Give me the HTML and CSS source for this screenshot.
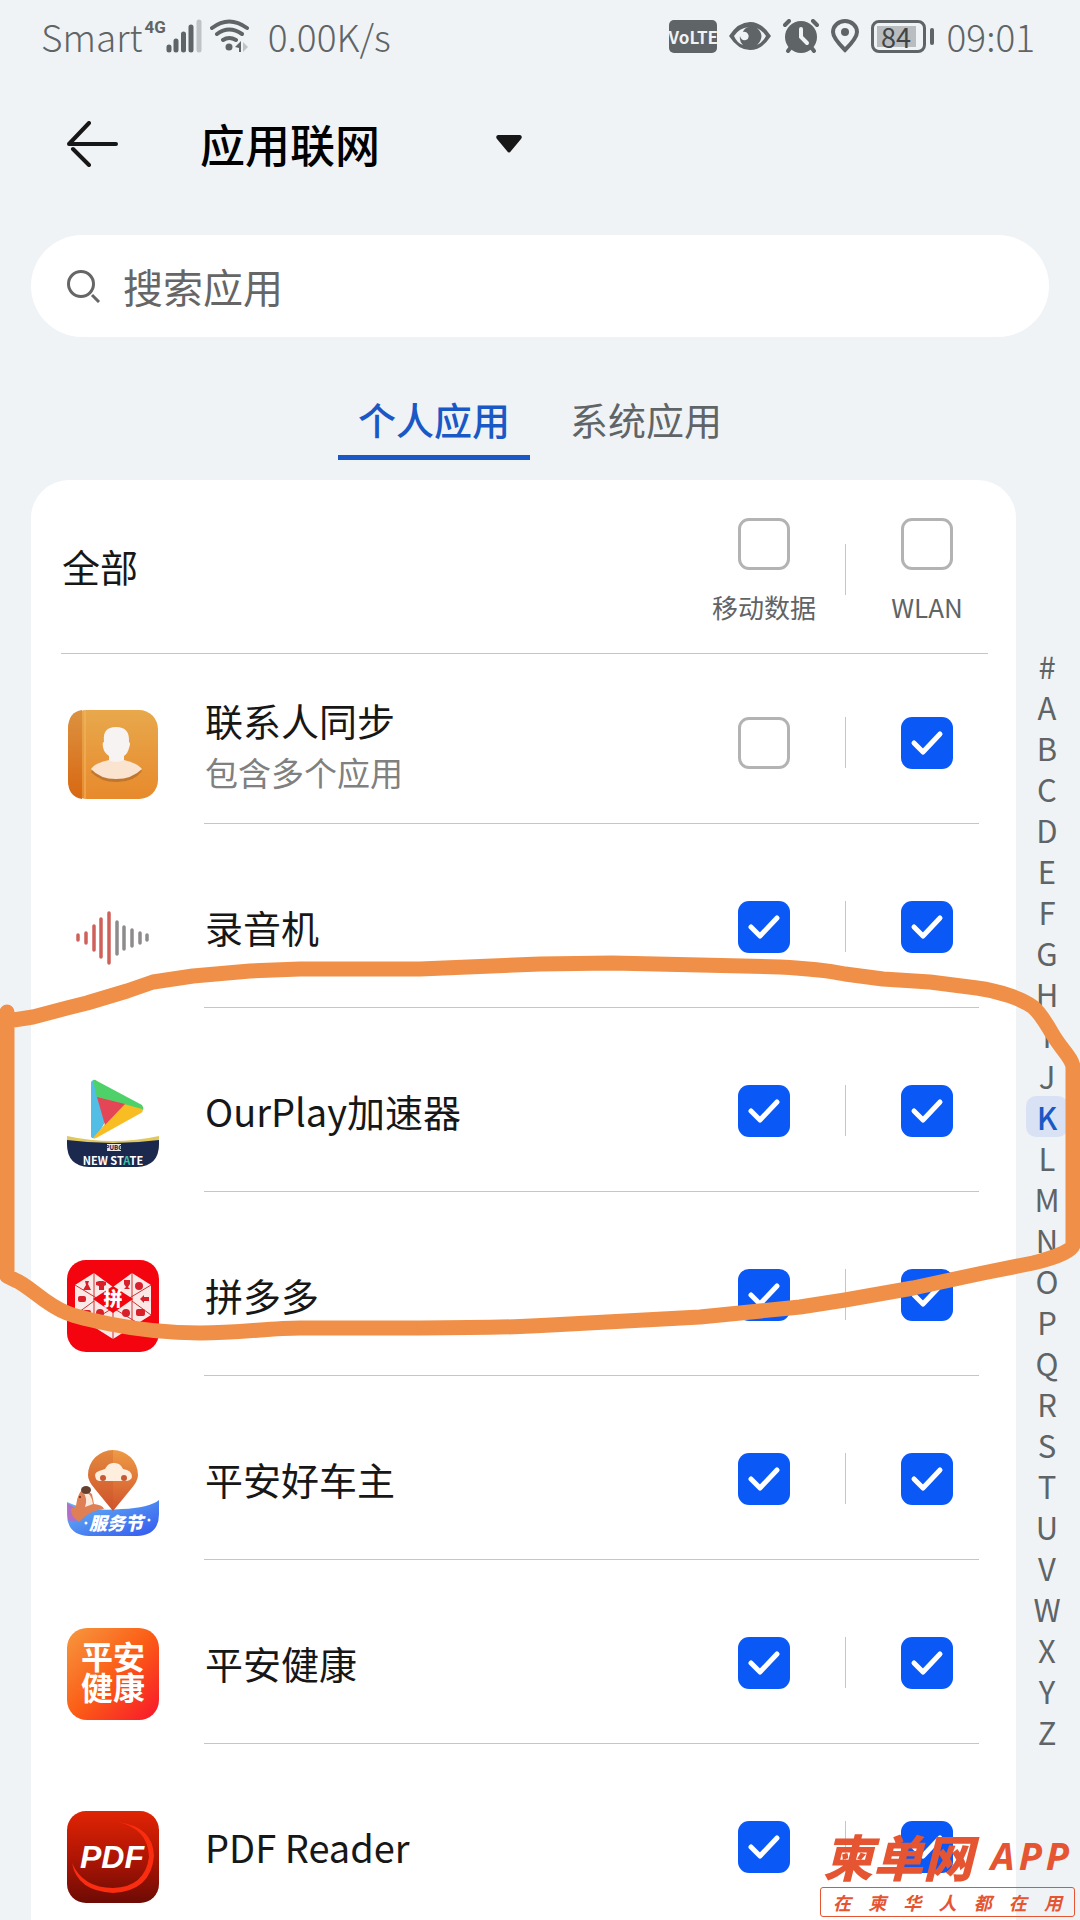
FILE: index.html
```html
<!doctype html>
<html lang="zh-CN">
    <head>
        <meta charset="UTF-8" />
        <meta name="viewport" content="width=device-width, initial-scale=1.0" />
        <title>应用联网</title>
        <link rel="stylesheet" href="styles.css">
    </head>
    <body>
        <div class="status-bar">
            <div class="status-left">
                <span>Smart</span>
                <span class="network">4G</span>
                <svg class="signal" width="36" height="34" viewBox="0 0 36 34" stroke-width="5" stroke-linecap="round">
                    <path d="M3 28v3M10 22v9M17.500 15v16M25 8v23" />
                    <path class="faded" d="M33 3v28" />
                </svg>
                <svg class="wifi" width="40" height="34" viewBox="0 0 40 34" fill="none" stroke-linecap="round">
                    <path stroke-width="4" d="M2 9Q19 -4 37 9M7 15Q19 6 32 15M13 21Q19 17 26 21" />
                    <circle class="solid" cx="19" cy="28" r="3.500" />
                    <path class="solid" d="M25 28l6-6v11h-2v-4z" />
                    <path class="faded-fill" d="M33 23l5 5-5 5z" />
                </svg>
                <span>0.00K/s</span>
            </div>
            <div class="status-right">
                <span class="volte">VoLTE</span>
                <svg width="42" height="28" viewBox="0 0 42 28">
                    <path class="solid" fill-rule="evenodd" d="M0 14Q9 0 21 0T42 14Q33 28 21 28T0 14zM5 14Q8 21 14 23Q10 19 11 14Q12 19 17 18Q21 16 19 12Q17 9 14 10Q15 6 20 5Q10 6 5 14zM28 6Q37 14 28 23Q34 20 37 14Q34 9 28 6z" />
                </svg>
                <svg width="36" height="34" viewBox="0 0 36 34" fill="none" stroke-linecap="round">
                    <circle class="solid" cx="18" cy="18" r="16" />
                    <path stroke-width="4" d="M2 6l4-4M34 6l-4-4M5 32l3-4M31 32l-3-4" />
                    <path class="hand" stroke-width="4" d="M18 10v8l6 6" />
                </svg>
                <svg width="28" height="34" viewBox="0 0 28 34" fill="none">
                    <path stroke-width="4" d="M14 31Q2 19 2 13A12 11 0 0 1 26 13Q26 19 14 31z" />
                    <circle class="solid" cx="14" cy="13" r="4" />
                </svg>
                <div class="battery"><span class="battery-level">84</span></div>
                <span>09:01</span>
            </div>
        </div>

        <header class="title-bar">
            <button class="back" type="button" aria-label="返回">
                <svg width="52" height="46" viewBox="0 0 52 46" fill="none" stroke-width="4" stroke-linecap="round" stroke-linejoin="round">
                    <path d="M50 23H3L23 2M7 28l16 16" />
                </svg>
            </button>
            <div class="picker">
                <select aria-label="页面">
                    <option>应用联网</option>
                </select>
                <svg width="26" height="18" viewBox="0 0 26 18">
                    <path d="M2 0H24Q27 1 25 4L15 16Q13 19 11 16L1 4Q-1 1 2 0z" />
                </svg>
            </div>
        </header>

        <div class="search">
            <svg width="34" height="34" viewBox="0 0 34 34" fill="none" stroke-width="3">
                <circle cx="14" cy="15" r="12.500" />
                <path d="M25 26l7 7" />
            </svg>
            <input type="text" placeholder="搜索应用" aria-label="搜索应用" />
        </div>

        <nav class="tabs">
            <button class="tab active" type="button">个人应用</button>
            <button class="tab" type="button">系统应用</button>
        </nav>

        <main class="content">
            <section class="card">
                <div class="all-row">
                    <span class="all-label">全部</span>
                    <div class="options">
                        <label class="option"><input type="checkbox" />移动数据</label>
                        <i class="divider"></i>
                        <label class="option"><input type="checkbox" />WLAN</label>
                    </div>
                </div>

                <ul class="apps">
                    <li class="app compact">
                        <svg class="app-icon" viewBox="0 0 92 92">
                            <defs>
                                <linearGradient id="book" x2="0" y2="1">
                                    <stop offset="0" stop-color="#e8a84c" />
                                    <stop offset="1" stop-color="#e78a2c" />
                                </linearGradient>
                                <linearGradient id="spine" x2="0" y2="1">
                                    <stop offset="0" stop-color="#dc9240" />
                                    <stop offset="1" stop-color="#d86712" />
                                </linearGradient>
                            </defs>
                            <rect x="1" y="2" width="90" height="89" rx="19" fill="url(#book)" />
                            <path d="M15 2Q1 4 1 21V72Q1 89 15 91z" fill="url(#spine)" />
                            <path d="M18 3v87" stroke="#f2b966" stroke-width="1" />
                            <path d="M24 64Q28 56 40 53H60Q72 57 75 63Q67 74 50 74T24 64z" fill="#a7642a" opacity=".6" />
                            <path d="M24 61Q28 55 42 52H57Q70 55 75 61Q65 71 49 71T24 61z" fill="#fbe4cf" />
                            <path d="M37 34Q35 19 49 19T62 34Q64 35 62 40Q61 45 57 48V52Q49 56 42 52V48Q37 45 36 39Q35 34 37 34z" fill="#f6f3f2" />
                        </svg>
                        <div class="app-body">
                            <div class="app-text">
                                <span class="app-name">联系人同步</span>
                                <span class="app-note">包含多个应用</span>
                            </div>
                            <div class="options">
                                <label class="option"><input type="checkbox" aria-label="联系人同步 移动数据" /></label>
                                <i class="divider"></i>
                                <label class="option"><input type="checkbox" aria-label="联系人同步 WLAN" checked /></label>
                            </div>
                        </div>
                    </li>
                    <li class="app">
                        <svg class="app-icon" viewBox="0 0 92 92" fill="none" stroke-width="3.500" stroke-linecap="round">
                            <path stroke="#d0605a" d="M11 43v5M19 41v10M27 34v24M34 27v38M42 21v50" />
                            <path stroke="#8d8b8c" d="M50 30v32M57 35v22M65 38v16M73 41v10M80 43v5" />
                        </svg>
                        <div class="app-body">
                            <span class="app-name">录音机</span>
                            <div class="options">
                                <label class="option"><input type="checkbox" aria-label="录音机 移动数据" checked /></label>
                                <i class="divider"></i>
                                <label class="option"><input type="checkbox" aria-label="录音机 WLAN" checked /></label>
                            </div>
                        </div>
                    </li>
                    <li class="app">
                        <svg class="app-icon" viewBox="0 0 92 92">
                            <path d="M24 7Q24 4 28 4L34 24 38 46 29 62Q24 63 24 60z" fill="#52bde5" />
                            <path d="M26 4Q28 3 30 5L75 29Q77 32 76 34L30 22z" fill="#4fd16a" />
                            <path d="M26 62L38 48 57 28 75 33Q77 35 74 37L31 61Q28 63 26 62z" fill="#f9bd24" />
                            <path d="M30 21L58 28 38 49z" fill="#e44656" />
                            <path d="M0 60Q46 70 92 60V72H0z" fill="#e1c85d" />
                            <path d="M0 64Q46 70 92 64V68Q92 90 70 91H22Q0 90 0 68z" fill="#1b294f" />
                            <rect x="40" y="68" width="14" height="7" fill="#e8eaf0" />
                            <text class="tiny" x="47" y="74" font-size="6" fill="#1b294f">PUBG</text>
                            <text class="state" x="46" y="89" font-size="11" fill="#fff">NEW ST<tspan fill="#3dbfa5">A</tspan>TE</text>
                        </svg>
                        <div class="app-body">
                            <span class="app-name">OurPlay加速器</span>
                            <div class="options">
                                <label class="option"><input type="checkbox" aria-label="OurPlay加速器 移动数据" checked /></label>
                                <i class="divider"></i>
                                <label class="option"><input type="checkbox" aria-label="OurPlay加速器 WLAN" checked /></label>
                            </div>
                        </div>
                    </li>
                    <li class="app">
                        <svg class="app-icon" viewBox="0 0 92 92">
                            <rect width="92" height="92" rx="19" fill="#f4040f" />
                            <path d="M8 25L27 13 46 27 65 13 84 25V55L46 79 8 55z" fill="#fbe9e7" />
                            <path d="M27 13V67M65 13V67M46 52V79M8 25L84 71M84 25L8 71M8 55L27 41M84 55L65 41" fill="none" stroke="#cf3030" stroke-width="1" />
                            <path d="M46 26L66 39 46 53 26 39z" fill="#f4040f" />
                            <path d="M7 55L46 80 85 55V75L46 88 7 75z" fill="#f4040f" />
                            <g fill="#d9202a">
                                <path d="M18 21h4l-1 3 3 6h-8l3-5zM29 22l3-1h4l3 1v3l-2 1v4h-5v-4l-3-1zM57 20h6v4l-2 3 2 2h-6l2-2-2-3z" />
                                <circle cx="72" cy="26" r="4" />
                                <rect x="11" y="36" width="8" height="6" rx="2" />
                                <path d="M73 39l4-4v2h5v4h-5v2z" />
                                <rect x="69" y="49" width="9" height="7" rx="2" />
                                <circle cx="33" cy="53" r="4" />
                                <circle cx="59" cy="53" r="4" />
                                <rect x="16" y="50" width="8" height="6" rx="2" />
                            </g>
                            <text class="tiny" x="46" y="46" font-size="19" fill="#fff">拼</text>
                        </svg>
                        <div class="app-body">
                            <span class="app-name">拼多多</span>
                            <div class="options">
                                <label class="option"><input type="checkbox" aria-label="拼多多 移动数据" checked /></label>
                                <i class="divider"></i>
                                <label class="option"><input type="checkbox" aria-label="拼多多 WLAN" checked /></label>
                            </div>
                        </div>
                    </li>
                    <li class="app">
                        <svg class="app-icon" viewBox="0 0 92 92">
                            <defs>
                                <linearGradient id="ribbon" x2="1" y2="1">
                                    <stop offset="0" stop-color="#67b9f4" />
                                    <stop offset="1" stop-color="#3457ef" />
                                </linearGradient>
                                <linearGradient id="pin" x2="0" y2="1">
                                    <stop offset="0" stop-color="#ee9b45" />
                                    <stop offset="1" stop-color="#d0532c" />
                                </linearGradient>
                            </defs>
                            <path d="M0 58Q20 68 55 65Q82 64 92 56V70Q92 91 70 92H22Q0 91 0 70z" fill="url(#ribbon)" />
                            <path d="M0 59Q12 65 16 73Q8 79 1 76z" fill="#b06fc9" />
                            <path d="M46 67L28 45Q21 37 21 31A25 25 0 0 1 71 31Q71 37 64 45z" fill="url(#pin)" />
                            <path d="M46 67L28 45Q21 37 21 31A25 25 0 0 1 46 6z" fill="#c9502c" opacity=".25" />
                            <path d="M29 35Q26 29 32 27L38 25Q41 19 46 19Q53 18 56 25Q65 26 65 33Q64 37 58 37H34Q30 37 29 35z" fill="#fdeedd" />
                            <circle cx="36" cy="34" r="3" fill="#c75a35" />
                            <circle cx="57" cy="34" r="3" fill="#c75a35" />
                            <path d="M9 62Q11 46 18 45L25 50 27 60Q36 61 37 65Q23 66 12 78Q3 72 4 65z" fill="#df7f55" />
                            <path d="M16 48Q24 47 26 60L18 63Q21 54 16 48z" fill="#fbe9dc" />
                            <ellipse cx="19" cy="46" rx="5" ry="4" fill="#66402f" />
                            <circle cx="13" cy="53" r="1" fill="#54301f" />
                            <circle cx="19" cy="79" r="1.500" fill="#fff" />
                            <circle cx="82" cy="76" r="1.500" fill="#fff" />
                            <text class="tiny slanted" x="49" y="86" font-size="18" fill="#fff">服务节</text>
                        </svg>
                        <div class="app-body">
                            <span class="app-name">平安好车主</span>
                            <div class="options">
                                <label class="option"><input type="checkbox" aria-label="平安好车主 移动数据" checked /></label>
                                <i class="divider"></i>
                                <label class="option"><input type="checkbox" aria-label="平安好车主 WLAN" checked /></label>
                            </div>
                        </div>
                    </li>
                    <li class="app">
                        <svg class="app-icon" viewBox="0 0 92 92">
                            <defs>
                                <linearGradient id="health" x2="1" y2="1">
                                    <stop offset="0" stop-color="#f6983f" />
                                    <stop offset=".5" stop-color="#fb5d16" />
                                    <stop offset="1" stop-color="#f8152c" />
                                </linearGradient>
                            </defs>
                            <rect width="92" height="92" rx="20" fill="url(#health)" />
                            <text class="health-text" x="46" y="41" font-size="32">平安</text>
                            <text class="health-text" x="46" y="72" font-size="32">健康</text>
                        </svg>
                        <div class="app-body">
                            <span class="app-name">平安健康</span>
                            <div class="options">
                                <label class="option"><input type="checkbox" aria-label="平安健康 移动数据" checked /></label>
                                <i class="divider"></i>
                                <label class="option"><input type="checkbox" aria-label="平安健康 WLAN" checked /></label>
                            </div>
                        </div>
                    </li>
                    <li class="app">
                        <svg class="app-icon" viewBox="0 0 92 92">
                            <defs>
                                <linearGradient id="pdf" x2="0" y2="1">
                                    <stop offset="0" stop-color="#e02404" />
                                    <stop offset=".5" stop-color="#b01504" />
                                    <stop offset="1" stop-color="#6d0b04" />
                                </linearGradient>
                            </defs>
                            <rect width="92" height="92" rx="19" fill="url(#pdf)" />
                            <path d="M50 11Q86 15 87 45Q84 80 46 82Q10 80 5 52Q16 77 46 77Q78 76 82 46Q81 17 50 11z" fill="#fb2d10" />
                            <text class="pdf-text" x="45" y="57" font-size="32">PDF</text>
                        </svg>
                        <div class="app-body">
                            <span class="app-name">PDF Reader</span>
                            <div class="options">
                                <label class="option"><input type="checkbox" aria-label="PDF Reader 移动数据" checked /></label>
                                <i class="divider"></i>
                                <label class="option"><input type="checkbox" aria-label="PDF Reader WLAN" checked /></label>
                            </div>
                        </div>
                    </li>
                </ul>
            </section>

            <nav class="index" aria-label="字母索引">
                <a href="#">#</a>
                <a href="#A">A</a>
                <a href="#B">B</a>
                <a href="#C">C</a>
                <a href="#D">D</a>
                <a href="#E">E</a>
                <a href="#F">F</a>
                <a href="#G">G</a>
                <a href="#H">H</a>
                <a href="#I">I</a>
                <a href="#J">J</a>
                <a class="current" href="#K">K</a>
                <a href="#L">L</a>
                <a href="#M">M</a>
                <a href="#N">N</a>
                <a href="#O">O</a>
                <a href="#P">P</a>
                <a href="#Q">Q</a>
                <a href="#R">R</a>
                <a href="#S">S</a>
                <a href="#T">T</a>
                <a href="#U">U</a>
                <a href="#V">V</a>
                <a href="#W">W</a>
                <a href="#X">X</a>
                <a href="#Y">Y</a>
                <a href="#Z">Z</a>
            </nav>
        </main>

        <!-- hand-drawn loop -->
        <svg class="marker" viewBox="0 0 1080 1920" fill="none">
            <path d="M7 1012V1276L15 1280C30 1286 45 1305 67 1313C80 1318 95 1321 110 1324C140 1330 170 1333 200 1333C240 1333 270 1328 300 1328H420C465 1328 505 1328 551 1325C600 1322 650 1320 700 1317L800 1307L845 1300L913 1288L983 1273L1033 1263C1050 1259 1073 1251 1073 1245V1067C1072 1058 1062 1050 1053 1035C1045 1021 1040 1013 1033 1007C1022 999 1000 991 977 988L930 982L883 979L845 974C820 969 800 968 780 967L700 965L612 963L540 964L420 969H300L250 971L193 976L153 982L127 991L87 1003L67 1008L33 1017L7 1021" />
        </svg>

        <div class="watermark">
            <div class="watermark-name">柬单网<span>APP</span></div>
            <div class="watermark-slogan">
                <span>在</span><span>柬</span><span>华</span><span>人</span><span>都</span><span>在</span><span>用</span>
            </div>
        </div>
    </body>
</html>
```

FILE: styles.css
```css
:root {
    --bg-color: #eff3f6;
    --card-bg: white;
    --text-color: #171717;
    --muted-color: #5f6466;
    --line-color: #c6c6c6;
    --accent: #0a59f7;
    --accent-dark: #1a58c6;
    --marker: #f09048;
    --watermark: #e55532;
}

* {
    box-sizing: border-box;
    margin: 0;
    padding: 0;
}

body {
    position: relative;
    font-family: "Noto Sans CJK SC", "Noto Sans", sans-serif;
    background: var(--bg-color);
    color: var(--text-color);
    overflow-x: hidden;
}

button,
input,
select {
    font-family: inherit;
    border: none;
    background: none;
    appearance: none;
    outline: none;
}

/* Status bar */
.status-bar {
    display: flex;
    justify-content: space-between;
    align-items: center;
    height: 72px;
    padding: 0 45px 0 41px;
    font-size: 37px;
    font-weight: 300;
    color: var(--muted-color);
}

.status-bar svg {
    stroke: var(--muted-color);
}

.status-left,
.status-right {
    display: flex;
    align-items: center;
}

.status-right {
    gap: 12px;
}

.network {
    align-self: flex-start;
    margin: 8px 0 0 2px;
    font: bold 17px/20px Roboto, sans-serif;
}

.wifi {
    margin: 0 18px 0 8px;
}

.status-bar .solid {
    fill: var(--muted-color);
    stroke: none;
}

.status-bar .faded {
    stroke: #bfc3c5;
}

.status-bar .faded-fill {
    fill: #bfc3c5;
    stroke: none;
}

.status-bar .hand {
    stroke: var(--bg-color);
}

.volte {
    width: 48px;
    border-radius: 5px;
    background: var(--muted-color);
    color: var(--bg-color);
    font: bold 17px/33px "Noto Sans CJK SC", sans-serif;
    text-align: center;
}

.battery {
    position: relative;
    width: 55px;
    height: 33px;
    margin-right: 9px;
    padding: 3px;
    border: 3px solid var(--muted-color);
    border-radius: 8px;
}

.battery::after {
    content: "";
    position: absolute;
    top: 5px;
    right: -11px;
    width: 4px;
    height: 17px;
    border-radius: 2px;
    background: var(--muted-color);
}

.battery-level {
    display: block;
    width: 39px;
    background: #b9bdbf;
    color: #404446;
    font-size: 27px;
    font-weight: 400;
    line-height: 21px;
    text-align: center;
}

/* Title */
.title-bar {
    display: flex;
    align-items: center;
    height: 144px;
    padding: 0 66px;
    gap: 82px;
}

.back {
    display: flex;
    cursor: pointer;
}

.back svg {
    stroke: var(--text-color);
}

.picker {
    display: grid;
    align-items: center;
    width: 322px;
}

.picker select,
.picker svg {
    grid-area: 1 / 1;
}

.picker select {
    font-size: 45px;
    font-weight: 500;
    line-height: 66px;
    color: black;
}

.picker svg {
    justify-self: end;
    fill: var(--text-color);
    pointer-events: none;
}

/* Search */
.search {
    display: flex;
    align-items: center;
    gap: 22px;
    height: 102px;
    margin: 19px 31px 0;
    padding: 0 36px;
    border-radius: 51px;
    background: var(--card-bg);
}

.search svg {
    stroke: #666;
}

.search input {
    flex: 1;
    font-size: 40px;
    color: var(--text-color);
}

.search input::placeholder {
    color: #666;
}

/* Tabs */
.tabs {
    display: flex;
    justify-content: center;
    gap: 20px;
    padding: 55px 0 20px;
}

.tab {
    padding: 0 20px 10px;
    border-bottom: 5px solid transparent;
    font-size: 38px;
    line-height: 53px;
    color: var(--muted-color);
    cursor: pointer;
}

.tab.active {
    border-bottom-color: var(--accent-dark);
    font-weight: 500;
    color: var(--accent-dark);
}

/* List */
.content {
    display: flex;
    align-items: flex-start;
    padding-left: 31px;
}

.card {
    flex: 1;
    padding: 0 28px 0 30px;
    border-radius: 38px 38px 0 0;
    background: var(--card-bg);
}

.all-row {
    display: flex;
    align-items: center;
    justify-content: space-between;
    padding: 38px 9px 33px 1px;
    border-bottom: 1px solid var(--line-color);
}

.all-label,
.app-name {
    font-size: 38px;
    line-height: 53px;
}

.all-label {
    padding-bottom: 8px;
}

.options {
    display: flex;
    align-items: center;
    gap: 29px;
}

.option {
    display: flex;
    flex-direction: column;
    align-items: center;
    gap: 24px;
    width: 104px;
    font-size: 26px;
    line-height: 26px;
    color: var(--muted-color);
}

.option input {
    width: 52px;
    height: 52px;
    border: 3px solid #b3b3b3;
    border-radius: 11px;
    cursor: pointer;
}

.option input:checked {
    border: none;
    background: var(--accent) url("data:image/svg+xml,%3Csvg xmlns='http://www.w3.org/2000/svg' viewBox='0 0 52 52' fill='none' stroke='white' stroke-width='5' stroke-linecap='round' stroke-linejoin='round'%3E%3Cpath d='M13 26l9 9 17-18'/%3E%3C/svg%3E");
}

.divider {
    width: 1px;
    height: 51px;
    background: var(--line-color);
}

.apps {
    list-style: none;
    padding: 0 9px 0 6px;
}

.app {
    display: flex;
    align-items: flex-end;
    gap: 45px;
}

.app-icon {
    width: 92px;
    height: 92px;
    margin-bottom: 24px;
}

.app-body {
    display: flex;
    flex: 1;
    align-items: center;
    justify-content: space-between;
    min-height: 184px;
    padding-top: 22px;
    border-bottom: 1px solid var(--line-color);
}

.compact .app-body {
    min-height: 170px;
    padding-top: 8px;
}

.app:last-child .app-icon {
    margin-bottom: 17px;
}

.app:last-child .app-body {
    min-height: 176px;
    padding-top: 29px;
    border-bottom: none;
}

.app-name {
    padding-left: 1px;
}

.app-text {
    display: flex;
    flex-direction: column;
    padding-top: 6px;
}

.app-note {
    padding-left: 1px;
    font-size: 33px;
    line-height: 53px;
    color: #808080;
}

.tiny {
    font-family: "Noto Sans CJK SC", sans-serif;
    font-weight: 900;
    text-anchor: middle;
}

.slanted {
    font-style: italic;
}

.state {
    font-family: "Noto Sans CJK SC", sans-serif;
    font-weight: bold;
    text-anchor: middle;
}

.health-text {
    font-family: "Noto Sans CJK SC", sans-serif;
    font-weight: bold;
    text-anchor: middle;
    fill: white;
}

.pdf-text {
    font-family: "Liberation Sans", sans-serif;
    font-weight: bold;
    font-style: italic;
    text-anchor: middle;
    fill: white;
}

/* Letter index */
.index {
    display: flex;
    flex-direction: column;
    align-items: center;
    width: 64px;
    padding: 165px 2px 0 0;
}

.index a {
    width: 42px;
    border-radius: 10px;
    font-size: 31px;
    line-height: 41px;
    text-align: center;
    text-decoration: none;
    color: var(--muted-color);
}

.index .current {
    background: #d9e2f5;
    font-weight: 500;
    color: var(--accent-dark);
}

.marker {
    position: absolute;
    top: 0;
    left: 0;
    width: 100%;
    stroke: var(--marker);
    stroke-width: 15px;
    stroke-linecap: round;
    stroke-linejoin: round;
    pointer-events: none;
}

.watermark {
    position: absolute;
    right: 5px;
    bottom: 3px;
    width: 255px;
    color: var(--watermark);
    font-weight: 900;
    font-style: italic;
    pointer-events: none;
}

.watermark-name {
    display: flex;
    align-items: center;
    justify-content: space-between;
    padding: 0 2px 5px 3px;
    font-size: 50px;
    line-height: 54px;
}

.watermark-name span {
    font: italic bold 38px/54px "Open Sans", sans-serif;
    letter-spacing: 4px;
}

.watermark-slogan {
    display: flex;
    justify-content: space-between;
    padding: 0 12px;
    border: 1px solid var(--watermark);
    border-radius: 3px;
    font-size: 18px;
    font-weight: 700;
    line-height: 28px;
}
```
